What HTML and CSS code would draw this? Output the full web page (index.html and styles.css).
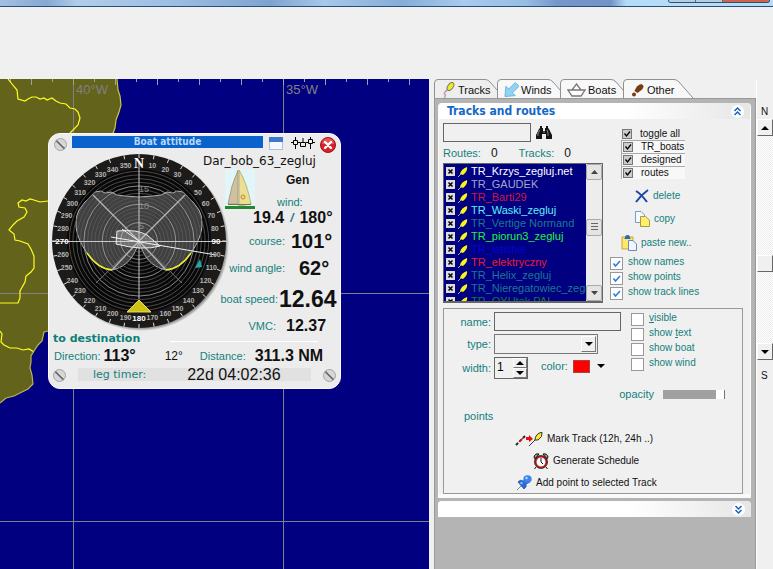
FILE: index.html
```html
<!DOCTYPE html>
<html lang="en">
<head>
<meta charset="utf-8">
<title>Boat attitude</title>
<link rel="stylesheet" href="styles.css">
</head>
<body>
<header class="titlebar"><span class="winbtns"><i></i><i></i><i class="x"></i></span></header>
<div class="toolbar"></div>
<div class="main">
  <section class="map">
    <svg class="chart" viewBox="0 79 429 490" preserveAspectRatio="xMinYMin slice" aria-hidden="true">
      <path fill="#63631c" d="M0 79H117L118 90L120 96L121 105L119 112L116 120L115 128L112 140L90 240L55 325L48 331L44 332L42 341L38 345L34 351L31 356L31 362L30 368L32 375L33 384L28 389L22 392L14 396L6 398L0 403Z"/>
      <g stroke="#808088" fill="none" shape-rendering="crispEdges">
        <path d="M73.500 79V569M283.500 79V569M0 293.500H429M0 521.500H429"/>
        <path id="ticks" stroke="#a0a0a8"/>
      </g>
      <g fill="none" stroke="#ffff1e" stroke-width="1.200">
        <path d="M117 79L118 90L120 96L121 105L119 112L116 120L115 128L112 136" stroke="#c8c83c"/>
        <path d="M8 79L12 84L17 90L18 99L25 101L28 99L32 97L36 97L40 99L44 98L47 100L52 98L56 101L60 103L66 104L70 108L75 109L78 112L80 118L78 125L74 129L70 133"/>
        <path d="M48 201L40 202L34 200L30 199L26 201L22 200L18 203L19 207L25 208L27 212L24 217L17 221L13 225L9 230L14 234L15 240L20 241L28 244L31 249L34 256L34 268L31 272L26 276L25 282L20 291L20 298L18 303H0"/>
        <path d="M0 331L2 334L1 342L4 345L10 348L17 348L23 350L29 349L34 352"/>
        <path d="M48 331L44 332L42 341L38 345L34 351L31 356L31 362L30 368L32 375L33 384L28 389L22 392L14 396L6 398L0 403" stroke="#b8b84a"/>
      </g>
      <g class="charttext"><text x="76" y="94">40°W</text><text x="286" y="94">35°W</text></g>
    </svg>

    <section class="dialog">
      <div class="dlgtop">
        <svg class="screw" viewBox="0 0 13 13"><use href="#screw"/></svg>
        <h2>Boat attitude</h2>
        <svg class="win" viewBox="0 0 14 13"><rect x=".5" y=".5" width="13" height="12" fill="#f5f8ff" stroke="#6a8cc0" stroke-dasharray="1 1"/><path fill="#3f78c8" d="M0 0H14V5H0Z"/></svg>
        <svg class="sliders" viewBox="0 0 24 12"><path fill="none" stroke="#000" stroke-width="1" d="M0 5.500H2M7 5.500H9M15 5.500H17M22 5.500H24M4.500 0V3M4.500 8V12M12 1V5M19.500 0V2M19.500 7V12M2.500 3.500H6.500V7.500H2.500ZM9.500 5.500H14.500V9.500H9.500ZM17.500 2.500H21.500V6.500H17.500Z"/></svg>
        <button class="close" aria-label="Close"><svg viewBox="0 0 16 16"><circle cx="8" cy="8" r="7.500" fill="#d8222a" stroke="#a01018"/><path d="M2 7A6 6 0 0 1 14 7Z" fill="#f07878" opacity=".6"/><path d="M5 5L11 11M11 5L5 11" stroke="#fff" stroke-width="2.400" stroke-linecap="round"/></svg></button>
      </div>
      <div class="dlgbody">
        <svg class="dial" id="dial" viewBox="0 0 178 178">
          <defs>
            <radialGradient id="shade"><stop offset=".94" stop-color="#555"/><stop offset="1" stop-color="#ececec"/></radialGradient>
          </defs>
          <circle cx="90" cy="90" r="88" fill="url(#shade)"/>
          <circle cx="88" cy="88" r="87" fill="#1c1b1a"/>
          <circle cx="88" cy="88" r="72" fill="#080808"/>
          <path fill="#909090" fill-opacity=".42" stroke="#b4b4b4" d="M88 88C84 103 76 114 61 117Q47 116 36 100C29 90 25 80 25 71Q25 62 28 57L34 49L44 39L50 38L54 40L60 39L66 42L74 43L88 44L102 43L110 42L116 39L122 40L126 38L132 39L142 49L148 57Q151 62 151 71C151 80 147 90 140 100Q129 116 115 117C100 114 92 103 88 88Z"/>
          <g id="rings" fill="none" stroke-width=".8"></g>
          <g fill="none">
            <path stroke="#777" d="M88 88L45 130M88 88L131 130"/>
            <path stroke="#b5b5b5" stroke-width="1.300" d="M42 42L88 88L134 42M61 117L88 88L115 117"/>
            <path stroke="#c8c8c8" d="M0 88.500H176M88 8V146"/>
            <path stroke="#f0f032" stroke-width="1.500" d="M36 100Q47 116 61 117M140 100Q129 116 115 117"/>
          </g>
          <path fill="#ddd" fill-opacity=".3" stroke="#eee" d="M66 78Q86 76 96 82L109 93Q92 98 65 91Z"/>
          <path fill="none" stroke="#f2f2f2" d="M60 84L165 102M71 76L88 88"/>
          <g class="scale"><text x="88" y="39">15</text><text x="88" y="56">10</text><text x="88" y="76">5</text></g>
          <path fill="#cfc014" stroke="#ece25c" d="M88 147L76 159H100Z"/>
          <path fill="#22a8a8" d="M149 106L144 115L151 114Z"/>
          <g id="marks"></g>
        </svg>
        <div class="info">
          <div class="boatname">Dar_bob_63_zegluj</div>
          <div class="boatid">
            <svg class="sail" viewBox="0 0 30 40"><path fill="#e2f5f8" d="M0 0H30V40H0Z"/><path fill="#cfc0a2" stroke="#8d8064" stroke-width=".6" d="M13 1Q6 16 3 35H13Z"/><path fill="#eadf92" stroke="#9b9058" stroke-width=".6" d="M14 1Q22 14 26 35L14 37Z"/><circle cx="18" cy="28" r="2" fill="none" stroke="#b88a1c"/><path fill="#7b7050" d="M3 35H26V36H3Z"/><path fill="#1f8a30" d="M0 37H30V40H0Z"/></svg>
            <div><b>Gen</b><span class="lab">wind:</span></div>
          </div>
          <div class="row mid wind"><b>19.4</b><i>/</i><b>180°</b></div>
          <div class="row big"><span class="lab">course:</span><b>101°</b></div>
          <div class="row big angle"><span class="lab">wind angle:</span><b>62°</b></div>
          <div class="row huge"><span class="lab">boat speed:</span><b>12.64</b></div>
          <div class="row mid vmc"><span class="lab">VMC:</span><b>12.37</b></div>
        </div>
      </div>
      <div class="desthead"><h3>to destination</h3><hr></div>
      <div class="dest"><span class="lab">Direction:</span><b>113°</b><span class="dev">12°</span><span class="lab">Distance:</span><b>311.3 NM</b></div>
      <div class="foot">
        <svg class="screw" viewBox="0 0 13 13"><g id="screw"><circle cx="6.500" cy="6.500" r="6" fill="#d6d6d6" stroke="#a4a4a4"/><path d="M2.500 2.500L10.500 10.500" stroke="#666" stroke-width="2"/><path d="M3.500 2L11 9.500" stroke="#fff" stroke-width=".8"/></g></svg>
        <div class="timer"><span>leg timer:</span><time>22d 04:02:36</time></div>
        <svg class="screw" viewBox="0 0 13 13"><use href="#screw"/></svg>
      </div>
    </section>
  </section>

  <aside class="side">
    <nav class="tabs">
      <button class="tab on"><svg class="shape" viewBox="0 0 71 19"><path d="M.5 19V4Q.5 .5 4 .5H51Q54 .5 56 3L70 19"/></svg><svg class="ico" viewBox="0 0 14 16"><path d="M6 8Q1 11 4 13L3 16" fill="none" stroke="#c89ab8" stroke-width="1.500"/><ellipse cx="9" cy="4.500" rx="2.600" ry="4.500" transform="rotate(35 9 4.500)" fill="#f0ea20" stroke="#777"/></svg><span>Tracks</span></button>
      <button class="tab"><svg class="shape" viewBox="0 0 71 19"><path d="M.5 19V4Q.5 .5 4 .5H51Q54 .5 56 3L70 19"/></svg><svg class="ico" viewBox="0 0 16 16"><path d="M12 0L16 4L9 11L12 14L1 15L2 4L5 7Z" fill="#90d4f2" stroke="#68b4dc"/></svg><span>Winds</span></button>
      <button class="tab"><svg class="shape" viewBox="0 0 71 19"><path d="M.5 19V4Q.5 .5 4 .5H51Q54 .5 56 3L70 19"/></svg><svg class="ico boat" viewBox="0 0 19 14"><path d="M1 7H18L14 13H5ZM5 7L9.500 1L14 7" fill="#fff" stroke="#777" stroke-width="1.300"/></svg><span>Boats</span></button>
      <button class="tab"><svg class="shape" viewBox="0 0 71 19"><path d="M.5 19V4Q.5 .5 4 .5H51Q54 .5 56 3L70 19"/></svg><svg class="ico" viewBox="0 0 14 16"><path d="M4 9Q6 3 11 2Q15 4 11 8L7 11Z" fill="#7a3a16"/><circle cx="3.500" cy="12.500" r="2" fill="#7a3a16"/></svg><span>Other</span></button>
    </nav>
    <div class="sheet">
      <section class="panel">
        <div class="phead"><h2>Tracks and routes</h2><button class="fold" aria-label="Collapse"><svg viewBox="0 0 13 13"><circle cx="6.500" cy="6.500" r="6.500" fill="#fff"/><path d="M3.500 6L6.500 3L9.500 6M3.500 10L6.500 7L9.500 10" fill="none" stroke="#1464c0" stroke-width="1.500"/></svg></button></div>
        <div class="pbody">
          <div class="upper">
            <div class="left">
              <div class="search"><input type="text" aria-label="Search"><button aria-label="Find"><svg viewBox="0 0 16 13"><path fill="#151515" d="M4 0H6V2H7V5H9V2H10V0H12V2L13 3L16 9V13H10V8H6V13H0V9L3 3L4 2Z"/><path d="M2 10V7L4 4M12 10V7L11 4M7 6H9" stroke="#888" fill="none"/></svg></button></div>
              <div class="counts"><span>Routes:</span><b>0</b><span>Tracks:</span><b>0</b></div>
              <div class="listbox">
                <ul id="tracks"></ul>
                <div class="sbar"><button aria-label="Up"><svg viewBox="0 0 7 4"><path d="M0 4L3.500 0L7 4Z"/></svg></button><span class="grip"><i></i></span><button aria-label="Down"><svg viewBox="0 0 7 4"><path d="M0 0H7L3.500 4Z"/></svg></button></div>
              </div>
            </div>
            <div class="right">
              <div class="toggles">
                <label><input type="checkbox" checked>toggle all</label>
                <label class="sunk"><input type="checkbox" checked>TR_boats</label>
                <label class="sunk"><input type="checkbox" checked>designed</label>
                <label class="sunk"><input type="checkbox" checked>routes</label>
              </div>
              <div class="acts">
                <button class="del"><svg viewBox="0 0 14 14"><path d="M1 2Q6 5 12 13M13 1Q6 6 1 13" fill="none" stroke="#1a46a4" stroke-width="2"/></svg>delete</button>
                <button class="cop"><svg viewBox="0 0 15 16"><path d="M.5 .5H6L9.500 4V11.500H.5Z" fill="#f4faff" stroke="#7c9cc4"/><path d="M5.500 5.500H10.500L14.500 9V15.500H5.500Z" fill="#fff06c" stroke="#ac9448"/></svg>copy</button>
                <button class="pas"><svg viewBox="0 0 16 16"><path d="M1 2H12V14H1Z" fill="#ffe96a" stroke="#c8a040"/><path d="M4 3Q4 0 6.500 0Q9 0 9 3L10 4H3Z" fill="#2868b8"/><path d="M7.500 5.500H12L15.500 9V15.500H7.500Z" fill="#f0f7ff" stroke="#6c88b4"/></svg>paste new..</button>
              </div>
              <div class="shows">
                <label><input type="checkbox" checked>show names</label>
                <label><input type="checkbox" checked>show points</label>
                <label><input type="checkbox" checked>show track lines</label>
              </div>
            </div>
          </div>
          <form class="props">
            <div class="fields">
              <div class="form">
                <label for="fn">name:</label><input id="fn" type="text">
                <label for="ft">type:</label><div class="sel"><select id="ft"><option></option></select><i><svg viewBox="0 0 8 4"><path d="M0 0H8L4 4Z"/></svg></i></div>
                <label for="fw">width:</label>
                <div class="wrow"><div class="spin"><input id="fw" type="text" value="1"><span><button type="button" aria-label="More"><svg viewBox="0 0 8 4"><path d="M0 4L4 0L8 4Z"/></svg></button><button type="button" aria-label="Less"><svg viewBox="0 0 8 4"><path d="M0 0H8L4 4Z"/></svg></button></span></div><span class="clab">color:</span><button type="button" class="color" aria-label="Color"><i></i><svg viewBox="0 0 8 4"><path d="M0 0H8L4 4Z"/></svg></button></div>
              </div>
              <div class="flags">
                <label><input type="checkbox"><span><u>v</u>isible</span></label>
                <label><input type="checkbox"><span>show <u>t</u>ext</span></label>
                <label><input type="checkbox"><span>show boat</span></label>
                <label><input type="checkbox"><span>show wind</span></label>
              </div>
            </div>
            <div class="opac"><label for="op">opacity</label><input id="op" type="range" value="100"></div>
            <div class="pts">points</div>
            <div class="cmds">
              <button type="button" class="c1"><svg class="wide" viewBox="0 0 28 15"><path d="M1 13L10 4" stroke="#222" stroke-width="2" stroke-dasharray="3 2"/><path d="M4 10L8 6" stroke="#d22" stroke-width="1.500"/><path d="M11 5H14V3L18 7L14 10V8H11Z" fill="#e01010"/><path d="M14 14L21 7" stroke="#335"/><path d="M20 8Q20 2 27 0Q28 5 23 8Z" fill="#f4ec30" stroke="#333"/></svg>Mark Track (12h, 24h ..)</button>
              <button type="button" class="c2"><svg viewBox="0 0 16 16"><path d="M1 4Q2 0 6 1L2 6ZM15 4Q14 0 10 1L14 6Z" fill="#999" stroke="#111"/><circle cx="8" cy="9" r="5.500" fill="#fff" stroke="#b01818" stroke-width="2"/><circle cx="8" cy="9" r="6.500" fill="none" stroke="#111" stroke-width=".7"/><path d="M8 5V9L10 11M3 14L1.500 16M13 14L14.500 16" stroke="#111" fill="none"/></svg>Generate Schedule</button>
              <button type="button" class="c3"><svg viewBox="0 0 16 16"><path d="M1 15L6 10" stroke="#888"/><path d="M2 7Q4 4 7 6L10 4L14 7L10 9Q11 12 8 14Z" fill="#2c6cd8" stroke="#1a48a0" stroke-width=".7"/><ellipse cx="11.500" cy="4" rx="4.200" ry="3.800" fill="#3c84ee"/><circle cx="10.500" cy="3" r="1.200" fill="#b4d8ff"/><circle cx="5.500" cy="8" r="1.200" fill="#8cc0ff"/></svg>Add point to selected Track</button>
            </div>
          </form>
        </div>
      </section>
      <section class="panel closed"><div class="phead"><button class="fold" aria-label="Expand"><svg viewBox="0 0 13 13"><circle cx="6.500" cy="6.500" r="6.500" fill="#fff"/><path d="M3.500 3L6.500 6L9.500 3M3.500 7L6.500 10L9.500 7" fill="none" stroke="#1464c0" stroke-width="1.500"/></svg></button></div></section>
    </div>
  </aside>
  <div class="strip">
    <span class="dir">N</span>
    <div class="vbar"><button aria-label="North"><svg viewBox="0 0 8 4"><path d="M0 4L4 0L8 4Z"/></svg></button><span class="thumb"></span><button aria-label="South"><svg viewBox="0 0 8 4"><path d="M0 0H8L4 4Z"/></svg></button></div>
    <span class="dir s">S</span>
  </div>
</div>
<script src="script.js"></script>
</body>
</html>
```
FILE: styles.css
```css
* { box-sizing: border-box; }
html, body { height: 100%; margin: 0; }
body {
  display: flex;
  flex-direction: column;
  overflow: hidden;
  background: #f0f0f0;
  font: 11px/14px "Liberation Sans", Arial, sans-serif;
  color: #111;
}
button {
  margin: 0; padding: 0; border: 0;
  background: none; font: inherit; color: inherit;
}
input, select { margin: 0; font: inherit; border-radius: 0; }
svg { display: block; flex: none; }
h2, h3 { margin: 0; font-size: inherit; }

.titlebar {
  flex: none;
  height: 7px;
  display: flex;
  justify-content: flex-end;
  align-items: flex-start;
  padding-right: 3px;
  border-bottom: 1px solid #24507c;
  background: linear-gradient(90deg, #a3c0e0, #86a8d4 6%, #b0cce8 10%, #9dbfe4 22%, #7fa3d0 35%, #a6c8ea 42%, #86acd8 52%, #a8cbee 60%, #98bde4 68%, #7697cc 72%, #7292c8 79%, #b4dcf8 81%, #b8dcf6);
}
.winbtns { display: flex; height: 3px; border: 1px solid #34506c; border-top: 0; border-radius: 0 0 3px 3px; overflow: hidden; }
.winbtns i { width: 27px; background: #b8cce0; border-right: 1px solid #56708c; }
.winbtns .x { width: 46px; background: #cc6450; border: 0; }
.toolbar { flex: none; height: 72px; }
.main { flex: 1; min-height: 0; display: flex; }

/* chart */
.map { position: relative; flex: 1; min-width: 0; overflow: hidden; background: #000080; }
.chart { width: 100%; height: 100%; }
.charttext { font-size: 13px; fill: #808080; }

/* boat attitude window */
.dialog {
  position: absolute; left: 48px; top: 54px;
  width: 293px;
  padding: 2px 4px 4px;
  border-radius: 12px;
  background: #ececec;
  border: 1px solid #fafafa;
}
.dlgtop { display: flex; height: 17px; padding-left: 1px; }
.screw { width: 13px; height: 13px; margin-top: 2px; }
.dlgtop h2 {
  flex: 1;
  height: 12px; margin: 0 6px 0 5px;
  background: #0a62cc; color: #b8d8f8;
  font: bold 10px/12px "DejaVu Sans Condensed", "DejaVu Sans", sans-serif;
  text-align: center;
}
.win { width: 14px; height: 13px; margin-top: 1px; }
.sliders { width: 24px; height: 12px; margin: 1px 5px 0 8px; }
.close svg { width: 16px; height: 16px; }
.dlgbody { display: flex; margin-left: -2px; height: 178px; }
.dial { width: 178px; height: 178px; }
.scale text { font-size: 9px; fill: #8a8a8a; }
.info { flex: 1; display: flex; flex-direction: column; margin-left: -26px; }
.boatname { font: 12px/16px "DejaVu Sans", sans-serif; height: 16px; }
.boatid { display: flex; height: 40px; padding-left: 22px; }
.sail { width: 30px; height: 40px; }
.boatid div { flex: 1; display: flex; flex-direction: column; justify-content: space-between; padding-left: 22px; }
.boatid b { font-size: 12px; padding: 4px 0 0 9px; }
.lab { color: #14807c; }
.row { display: grid; grid-template-columns: 82px 1fr; column-gap: 6px; align-items: center; flex: none; }
.row .lab { text-align: right; }
.mid b, .dest b { font-size: 16px; line-height: 18px; }
.big b { font-size: 20px; line-height: 22px; }
.huge b { font-size: 23px; line-height: 26px; }
.big { height: 27px; }
.angle b { padding-left: 8px; }
.row.wind { display: flex; justify-content: flex-end; gap: 6px; height: 18px; padding-right: 4px; }
.wind i { font-weight: bold; font-size: 12px; color: #14807c; }
.row.huge { height: 36px; grid-template-columns: 75px 1fr; column-gap: 1px; }
.row.vmc { height: 17px; grid-template-columns: 73px 1fr; column-gap: 10px; }
.desthead { display: flex; align-items: center; height: 16px; gap: 30px; }
.desthead h3 { font: bold 11px/14px "DejaVu Sans", sans-serif; color: #0c8078; }
hr { flex: 1; margin: 4px 18px 0 0; border: 0; border-top: 1px solid #fff; }
.dest { display: flex; align-items: center; height: 18px; gap: 3px; padding-left: 1px; }
.dev { margin: 0 14px 0 26px; font-size: 12px; }
.dest b + .dev + .lab { margin-right: 6px; }
.foot { display: flex; align-items: center; height: 19px; gap: 12px; }
.timer { flex: 1; display: flex; align-items: center; height: 13px; background: #e1e1e1; padding-left: 15px; gap: 41px; white-space: nowrap; }
.timer span { font: 11px/14px "DejaVu Sans", sans-serif; color: #14807c; }
.timer time { font-size: 16px; line-height: 18px; }

/* side panel */
.side { flex: none; width: 327px; padding-left: 5px; background: #f0f0f0; display: flex; flex-direction: column; }
.tabs { display: flex; height: 19px; flex: none; }
.tab { position: relative; width: 71px; margin-right: -8px; display: flex; align-items: center; gap: 2px; padding: 2px 0 0 7px; font-size: 11px; text-align: left; }
.shape { position: absolute; inset: 0; width: 71px; height: 19px; }
.shape path { fill: #f8f8f8; stroke: #909090; }
.on .shape path { fill: #eee; }
.ico { position: relative; width: 15px; height: 16px; }
.boat { width: 19px; height: 14px; }
.tab span { position: relative; }
.sheet { flex: 1; width: 322px; padding: 4px 4px 0 3px; border: 1px solid #999; border-width: 1px 1px 0 1px; background: #b4b4b4; }
.panel { background: #f0f0f0; border: 1px solid #fafafa; border-width: 0 1px 4px; border-radius: 4px 4px 0 0; }
.phead { display: flex; align-items: center; height: 16px; padding: 0 6px 0 8px; border-radius: 4px 4px 0 0; background: linear-gradient(90deg, #fff 60%, #e6e6e6); }
.phead h2 { font: bold 12px/16px "DejaVu Sans Condensed", "DejaVu Sans", sans-serif; color: #1468c8; }
.fold { margin-left: auto; }
.fold svg { width: 13px; height: 13px; }
.closed { margin-top: 3px; border-width: 0; }
.pbody { padding: 4px 7px 0 4px; }
.upper { display: flex; height: 185px; }
.left { width: 160px; display: flex; flex-direction: column; }
.search { display: flex; align-items: center; gap: 5px; }
.search input { width: 88px; height: 19px; border: 1px solid #666; background: #f0f0f0; }
.search svg { width: 16px; height: 13px; }
.counts { display: flex; gap: 10px; height: 21px; align-items: center; color: #14807c; }
.counts b { font-weight: normal; font-size: 12px; color: #111; margin-right: 11px; }
.listbox { display: flex; height: 140px; border: 1px solid #666; border-width: 1px 1px 2px; background: #000080; overflow: hidden; }
.listbox ul { flex: 1; min-width: 0; margin: 0; padding: 1px 0 0 2px; list-style: none; overflow: hidden; font-size: 11px; white-space: nowrap; }
.listbox label { display: flex; align-items: center; gap: 3px; height: 13px; line-height: 13px; }
.listbox svg { width: 10px; height: 10px; }
input[type="checkbox"] { appearance: none; flex: none; background: #fff center/100% no-repeat; border: 1px solid #999; }
.listbox input { width: 9px; height: 9px; border: 0; background-color: #ddd; background-image: url("data:image/svg+xml,%3Csvg xmlns='http://www.w3.org/2000/svg' viewBox='0 0 9 9'%3E%3Cpath d='M2.500 2.500L6.500 6.500M6.500 2.500L2.500 6.500' stroke='black' stroke-width='1.500'/%3E%3C/svg%3E"); }
.sbar { width: 16px; display: flex; flex-direction: column; align-items: stretch; background: #ededed; }
.sbar button, .grip { flex: none; height: 16px; display: flex; align-items: center; justify-content: center; background: #e4e4e4; border: 1px solid #aaa; border-radius: 2px; }
.sbar svg { width: 7px; height: 4px; fill: #444; }
.sbar button:last-child { margin-top: auto; }
.sbar .grip { margin-top: 39px; height: 17px; }
.grip i { width: 7px; height: 9px; background: repeating-linear-gradient(#666 0 1px, transparent 1px 3px); }

.right { flex: 1; font-size: 10px; padding-left: 7px; }
.toggles { width: 64px; margin-left: 11px; padding-top: 4px; }
.toggles label { display: flex; align-items: center; gap: 8px; height: 13px; padding-left: 1px; white-space: nowrap; }
.toggles .sunk { border: 1px solid #aaa; border-width: 1px 0 0 1px; background: #f8f8f8; }
.toggles input { width: 10px; height: 10px; background-color: #ccc; border-color: #777; }
.toggles input:checked { background-image: url("data:image/svg+xml,%3Csvg xmlns='http://www.w3.org/2000/svg' viewBox='0 0 8 8'%3E%3Cpath d='M1.500 3.500L3.500 6L7 1.500' fill='none' stroke='black' stroke-width='1.300'/%3E%3C/svg%3E"); }
.acts { display: flex; flex-direction: column; align-items: flex-start; gap: 8px; padding-top: 10px; color: #14807c; }
.acts button { display: flex; align-items: center; gap: 4px; }
.acts .del svg { width: 14px; height: 14px; }
.acts .cop svg { width: 15px; height: 16px; }
.acts .pas svg { width: 16px; height: 16px; }
.del, .cop { margin-left: 25px; }
.pas { margin-left: 11px; }
.shows { padding-top: 5px; }
.shows label, .flags label { display: flex; gap: 5px; height: 15px; line-height: 12px; color: #14807c; white-space: nowrap; }
.shows input, .flags input { width: 13px; height: 13px; margin-top: 1px; }
.shows input:checked { background-image: url("data:image/svg+xml,%3Csvg xmlns='http://www.w3.org/2000/svg' viewBox='0 0 11 11'%3E%3Cpath d='M2.500 5.500L4.500 8L9 3' fill='none' stroke='%232a80e0' stroke-width='1.600'/%3E%3C/svg%3E"); }

.props { height: 186px; border: 1px solid #999; padding: 3px 8px 0 7px; color: #14807c; }
.fields { display: flex; gap: 10px; }
.form { display: grid; grid-template-columns: 40px 127px; grid-template-rows: 19px 20px 22px; gap: 3px; align-items: center; }
.form label { text-align: right; }
.form input { width: 100%; height: 19px; border: 1px solid #666; background: #f0f0f0; }
.sel { position: relative; width: 104px; height: 20px; }
.sel select { appearance: none; width: 100%; height: 20px; border: 1px solid #777; background: #f0f0f0; }
.sel i { position: absolute; right: 2px; top: 2px; width: 15px; height: 16px; display: flex; align-items: center; justify-content: center; background: #f0f0f0; border: 1px solid; border-color: #fff #777 #777 #fff; pointer-events: none; }
.sel svg, .color svg, .spin svg, .vbar svg { width: 8px; height: 4px; fill: #000; }
.wrow { display: flex; align-items: center; }
.spin { display: flex; width: 34px; height: 22px; border: 1px solid #666; }
.form .spin input { flex: 1; width: 10px; height: 18px; border: 0; padding: 0 0 0 2px; font-size: 12px; }
.spin span { display: flex; flex-direction: column; width: 14px; }
.spin button { flex: 1; display: flex; align-items: center; justify-content: center; border: 1px solid; border-color: #fff #777 #777 #fff; }
.clab { margin: 0 5px 4px 13px; }
.color { display: flex; align-items: center; gap: 7px; margin-bottom: 4px; }
.color i { width: 17px; height: 13px; background: #f00; border: 1px solid #a44; }
.flags { font-size: 10px; }
.opac { display: flex; justify-content: flex-end; align-items: center; gap: 9px; height: 14px; margin-top: 8px; padding-right: 9px; }
.opac input { appearance: none; width: 62px; height: 9px; background: #a0a0a0; border-right: 1px solid #777; }
.opac input::-webkit-slider-thumb { appearance: none; width: 8px; height: 9px; background: #fff; }
.pts { padding-left: 13px; margin-top: 8px; }
.cmds { font-size: 10px; color: #111; padding-top: 5px; }
.cmds button { display: flex; align-items: center; gap: 4px; height: 22px; }
.cmds svg { width: 16px; height: 16px; }
.cmds .wide { width: 28px; height: 15px; }
.c1 { margin-left: 64px; }
.c2 { margin-left: 82px; }
.c3 { margin-left: 65px; }

/* latitude scroll strip */
.strip { flex: none; width: 17px; display: flex; flex-direction: column; border-left: 1px solid #fff; background: #f0f0f0; }
.dir { height: 40px; padding: 26px 0 0 4px; font-size: 10px; }
.vbar { height: 241px; display: flex; flex-direction: column; justify-content: space-between; background: repeating-conic-gradient(#fff 0 25%, #ececec 0 50%) 0 0/2px 2px; }
.vbar button, .thumb { height: 17px; display: flex; align-items: center; justify-content: center; background: #f0f0f0; border: 1px solid; border-color: #fff #666 #666 #fff; }
.thumb { margin-top: 48px; }
.dir.s { padding-top: 9px; }
```
FILE: script.js
```js
const NS = 'http://www.w3.org/2000/svg';
function add(parent, name, attrs, text) {
  const el = document.createElementNS(NS, name);
  for (const k in attrs) el.setAttribute(k, attrs[k]);
  if (text) el.textContent = text;
  parent.appendChild(el);
  return el;
}

// Longitude ticks along the top of the chart
let d = '';
for (let i = -3, x; (x = 73.5 + 21 * i) < 429; i++) d += `M${x} 79v${i % 2 ? 3 : 6}`;
document.getElementById('ticks').setAttribute('d', d);

// Speed rings of the polar
const rings = document.getElementById('rings');
for (let i = 1; i <= 19; i++) {
  add(rings, 'circle', { cx: 88, cy: 88, r: i * 3.67, stroke: i % 5 ? '#5c5c5c' : '#a8a8a8' });
}

// Compass rose
const marks = document.getElementById('marks');
for (let a = 0; a < 360; a += 10) {
  const t = a * Math.PI / 180, s = Math.sin(t), c = -Math.cos(t);
  add(marks, 'path', { stroke: '#ddd', d: `M${88 + 83 * s} ${88 + 83 * c}L${88 + 87 * s} ${88 + 87 * c}` });
  const main = a % 90 === 0;
  add(marks, 'text', {
    x: 88 + 77 * s, y: 88 + 77 * c + (a ? 3 : 4),
    'text-anchor': 'middle', 'font-weight': 'bold',
    'font-size': a === 0 ? 14 : main ? 8 : 7,
    'font-family': a === 0 ? 'Liberation Serif' : 'Liberation Sans',
    fill: main ? '#fff' : '#b4b4b4'
  }, a === 0 ? 'N' : String(a));
}

// Track list
const tracks = [
  ['TR_Krzys_zegluj.net', '#ffffff'], ['TR_GAUDEK', '#a4a4cc'], ['TR_Barti29', '#d01840'],
  ['TR_Waski_zegluj', '#5cf0f8'], ['TR_Vertige Normand', '#1c7890'], ['TR_piorun3_zegluj', '#20f040'],
  ['TR_Istishie', '#0404d8'], ['TR_elektryczny', '#f01830'], ['TR_Helix_zegluj', '#1c7890'],
  ['TR_Nieregatowiec_zegluj', '#1c7890'], ['TR_OYUtek PAL', '#107848']
];
document.getElementById('tracks').innerHTML = tracks.map(([n, c]) =>
  `<li><label style="color:${c}"><input type="checkbox" checked><svg viewBox="0 0 10 10"><path d="M0 10L4 6" stroke="#aac"/><path d="M2 7Q3 2 9 0Q10 4 5 8Z" fill="#f8f420"/></svg>${n}</label></li>`).join('');
```
